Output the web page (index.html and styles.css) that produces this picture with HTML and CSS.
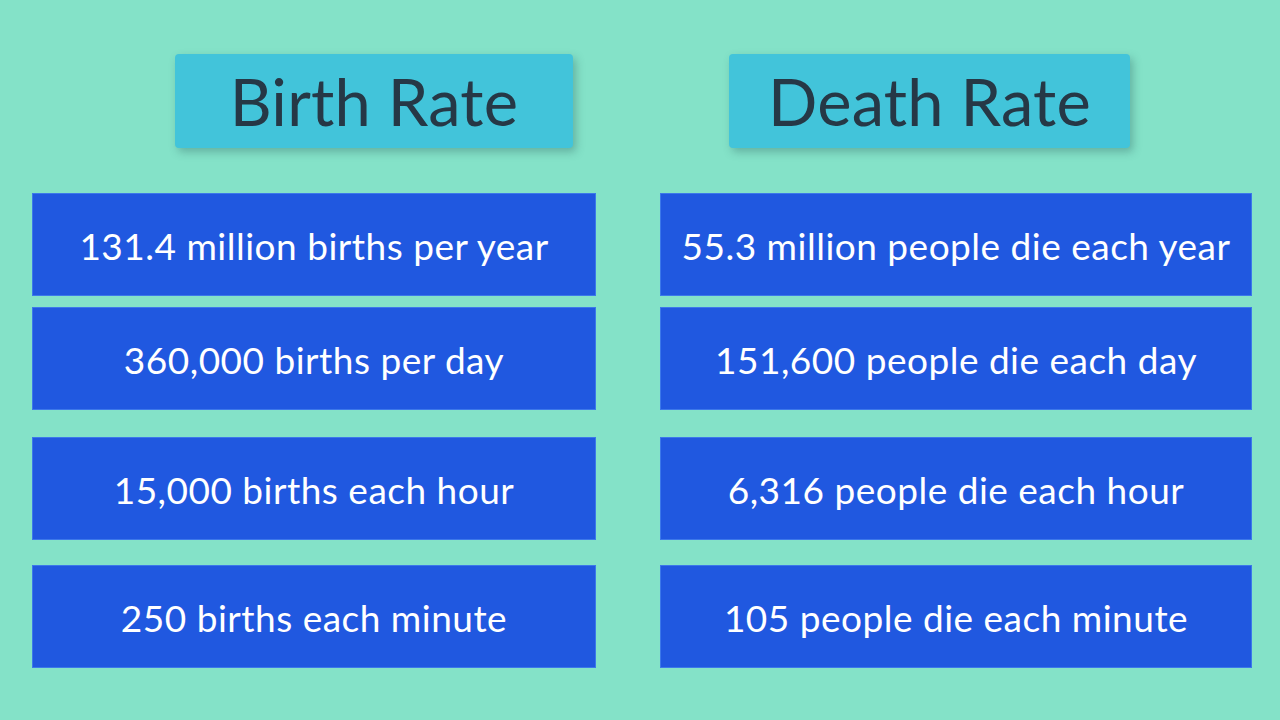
FILE: index.html
```html
<!DOCTYPE html>
<html lang="en">
<head>
<meta charset="utf-8">
<title>Birth Rate vs Death Rate</title>
<link rel="stylesheet" href="styles.css">
</head>
<body>
<main class="board">
  <section class="col col-birth">
    <h1 class="title title-birth">Birth Rate</h1>
    <div class="stat r1">131.4 million births per year</div>
    <div class="stat r2">360,000 births per day</div>
    <div class="stat r3">15,000 births each hour</div>
    <div class="stat r4">250 births each minute</div>
  </section>
  <section class="col col-death">
    <h1 class="title title-death">Death Rate</h1>
    <div class="stat r1">55.3 million people die each year</div>
    <div class="stat r2">151,600 people die each day</div>
    <div class="stat r3">6,316 people die each hour</div>
    <div class="stat r4">105 people die each minute</div>
  </section>
</main>
</body>
</html>
```

FILE: styles.css
```css
html, body {
  margin: 0;
  padding: 0;
}
body {
  width: 1280px;
  height: 720px;
  overflow: hidden;
  background: #84e2c8;
  font-family: "Lato", "Noto Sans", sans-serif;
}
.board {
  display: grid;
  grid-template-columns: 564px 592px;
  column-gap: 64px;
  padding: 54px 28px 0 32px;
}
.col {
  display: flex;
  flex-direction: column;
  align-items: flex-start;
}
.title {
  margin: 0;
  height: 94px;
  display: flex;
  align-items: center;
  justify-content: center;
  background: #42c4da;
  color: #263846;
  font-weight: 400;
  font-size: 65px;
  border-radius: 4px;
  box-shadow: 3px 4px 8px rgba(40, 90, 90, 0.35);
  letter-spacing: 0.2px;
}
.title-birth {
  width: 398px;
  margin-left: 143px;
}
.title-death {
  width: 401px;
  margin-left: 69px;
}
.stat {
  box-sizing: border-box;
  width: 100%;
  height: 103px;
  display: flex;
  align-items: center;
  justify-content: center;
  background: #2058e0;
  border: 1px solid #3c78ea;
  color: #ffffff;
  font-size: 37px;
  letter-spacing: 0.5px;
  padding-top: 2px;
}
.r1 { margin-top: 45px; }
.r2 { margin-top: 11px; }
.r3 { margin-top: 27px; }
.r4 { margin-top: 25px; }
```
